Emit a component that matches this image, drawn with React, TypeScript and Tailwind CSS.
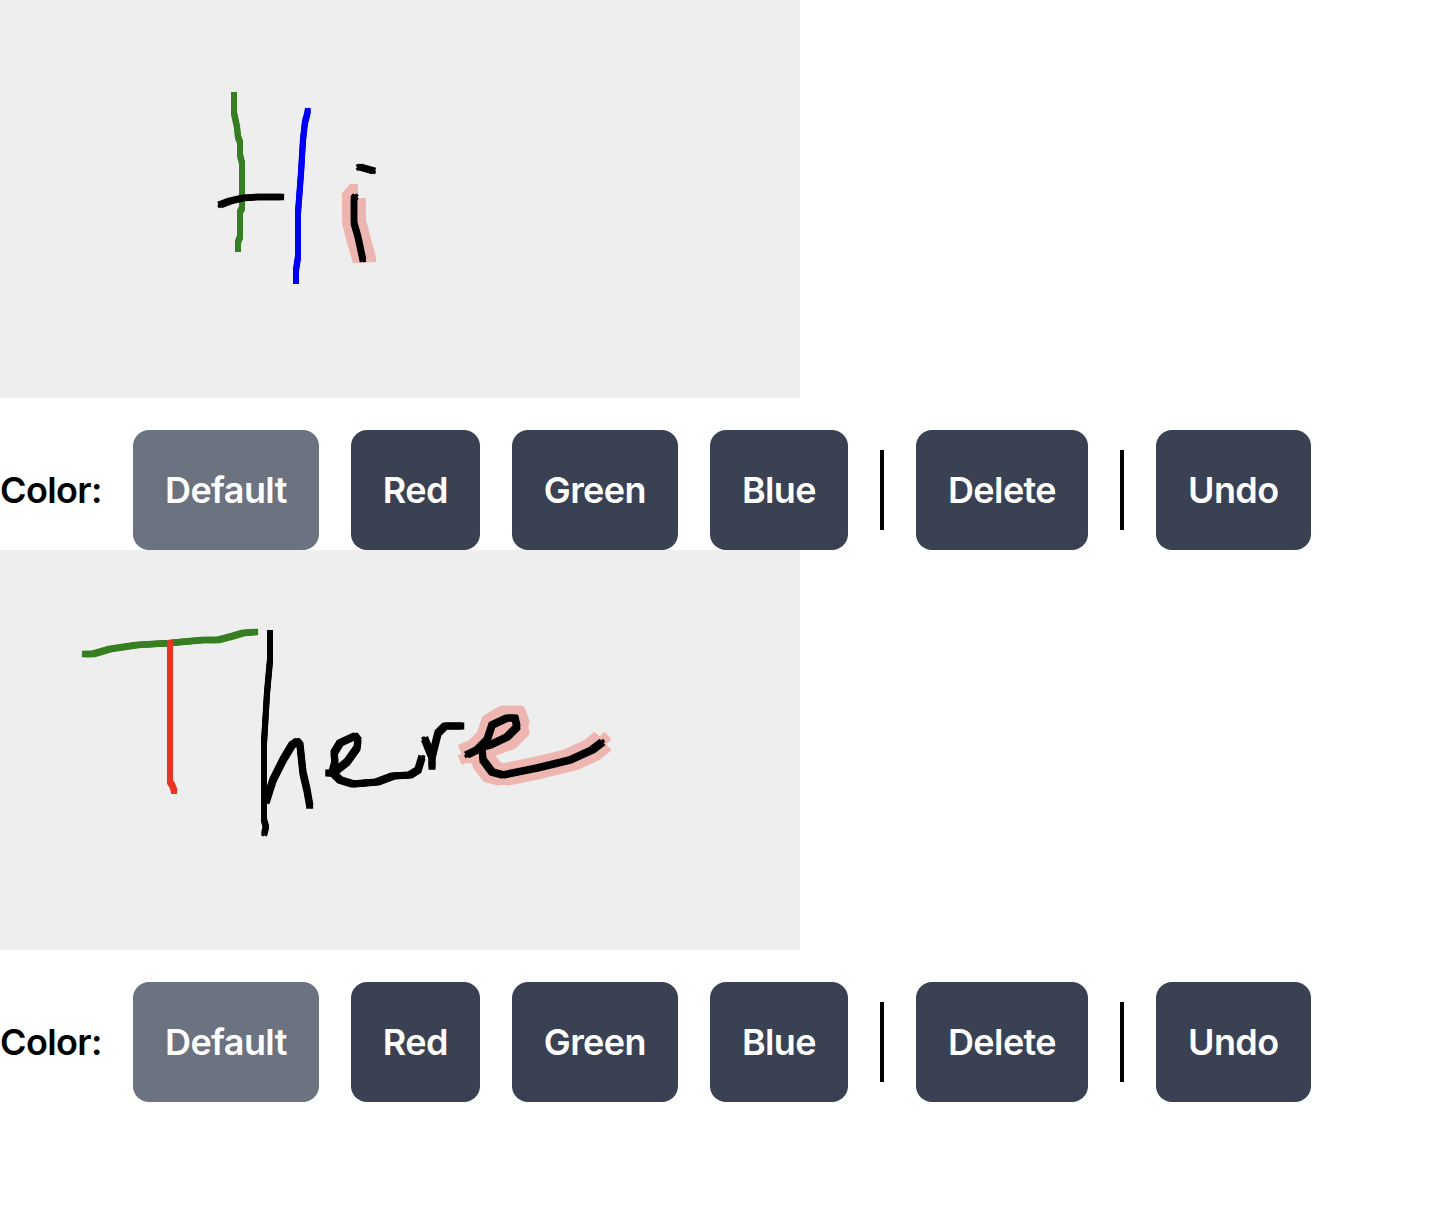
function Toolbar() {
  const btn = "rounded-2xl px-8 py-10 text-4xl font-semibold tracking-[-0.6px] text-white";
  return (
    <div className="mt-8 flex items-center gap-8">
      <span className="w-[101px] text-4xl font-semibold tracking-[-0.64px] whitespace-nowrap text-black">Color:</span>
      <button className={btn + " bg-[#6b7280]"}>Default</button>
      <button className={btn + " bg-[#3a4152]"}>Red</button>
      <button className={btn + " bg-[#3a4152]"}>Green</button>
      <button className={btn + " bg-[#3a4152]"}>Blue</button>
      <div className="h-20 w-1 bg-black" />
      <button className={btn + " bg-[#3a4152]"}>Delete</button>
      <div className="h-20 w-1 bg-black" />
      <button className={btn + " bg-[#3a4152]"}>Undo</button>
    </div>
  );
}

const PINK = "#edb6b1";
const GREEN = "#377e22";
const BLUE = "#0000f5";
const RED = "#ea3323";

// A square pen: the same line swept at the corners of the brush, so diagonals come out thicker.
function Stroke({ points, color, size = 6 }: { points: string; color: string; size?: number }) {
  const d = size / 4;
  const offsets = [
    [-d, -d],
    [d, -d],
    [-d, d],
    [d, d],
  ];
  return (
    <g fill="none" stroke={color} strokeLinejoin="round">
      <polyline points={points} strokeWidth={size * 0.9} />
      {offsets.map(([x, y]) => (
        <polyline key={`${x},${y}`} points={points} strokeWidth={size / 2} transform={`translate(${x},${y})`} />
      ))}
    </g>
  );
}

export default function App() {
  return (
    <div className="font-['Inter',sans-serif] w-[1444px] h-[1208px] bg-white">
      <svg className="block" width="800" height="398" viewBox="0 0 800 398">
        <rect width="800" height="398" fill="#eeeeee" />
        <polygon points="342,193 350,184 358,184 358,198 366,198 366,220 376,257 376,262 353,263 347,243 342,223" fill={PINK} />
        <Stroke points="234,93.5 234,113 237,127 238,137 240,142 240,155 242,163 242,208 240,212 240,237 238,242 238,250.5" color={GREEN} />
        <Stroke points="219.5,205 230,201 243,198 257,197 282.5,197" color="#000" size={6.5} />
        <Stroke points="308,109.5 307,115 305,122 303,140 301,173 298,213 298,257 296,270 296,282.5" color={BLUE} />
        <Stroke points="358,168 360,167 374,171" color="#000" size={6.5} />
        <Stroke points="356,196 354,198 354,223 358,237 363,260.5" color="#000" size={6.5} />
      </svg>
      <Toolbar />
      <svg className="block" width="800" height="400" viewBox="0 0 800 400">
        <rect width="800" height="400" fill="#eeeeee" />
        <g transform="translate(0,-550)">
          <Stroke points="465,755 477,750 487,740 492,725 507,716 515,716 519,727 507,739 490,745 482,747 483,760 492,772 503,775 537,768 570,760 592,750 603,741" color={PINK} size={21} />
          <Stroke points="83.5,654 93,654 110,649 137,645 170,643 203,640 218,640 233,636 243,633 255,632 256.5,632" color={GREEN} size={6.5} />
          <Stroke points="170,641.5 170,782 172,785 174,790 174,792.5" color={RED} />
          <Stroke points="270,631.5 270,660 267,693 264,743 264,820 266,827 264,834.5" color="#000" />
          <Stroke points="266,802 273,780 283,760 292,745 297,741.5 300,745 303,773 307,790 310,807" color="#000" size={7} />
          <Stroke points="327,773 332,773 335,762 334,753 340,743 355,736 358,740 357,748 347,762 333,773 340,780 353,784 377,782 393,776 410,775 418,770 422,757" color="#000" size={7} />
          <Stroke points="424.5,738.5 432,757 432,768" color="#000" size={7} />
          <Stroke points="432,757 438,733 445,726 462.5,726" color="#000" size={7} />
          <Stroke points="466.5,755 477,750 487,740 492,725 507,718 515,718 517,727 507,737 490,745 482,747 483,760 492,772 503,775 537,768 570,760 592,750 602.5,742" color="#000" size={7} />
        </g>
      </svg>
      <Toolbar />
    </div>
  );
}
